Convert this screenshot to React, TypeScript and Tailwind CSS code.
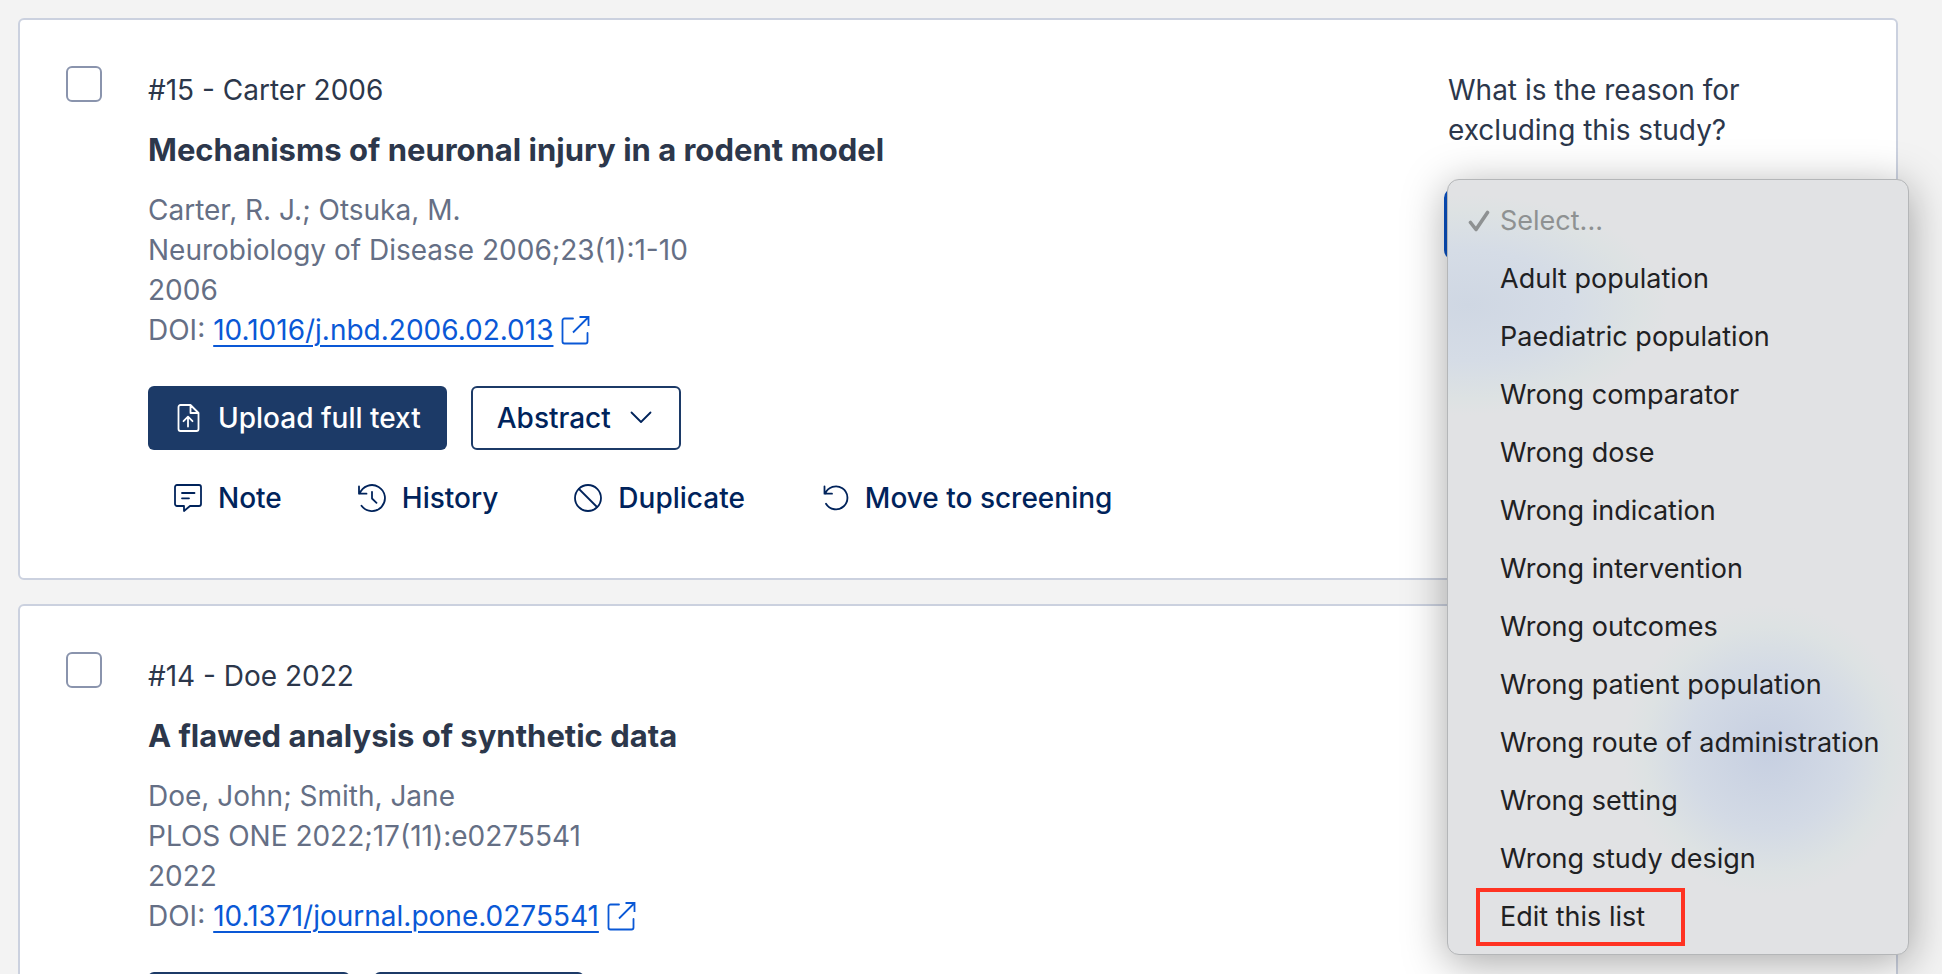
import { useState, type ReactNode } from 'react'

type Study = {
  ref: string
  title: string
  authors: string
  journal: string
  year: string
  doi: string
  hasFullText: boolean
}

const studies: Study[] = [
  {
    ref: '#15 - Carter 2006',
    title: 'Mechanisms of neuronal injury in a rodent model',
    authors: 'Carter, R. J.; Otsuka, M.',
    journal: 'Neurobiology of Disease 2006;23(1):1-10',
    year: '2006',
    doi: '10.1016/j.nbd.2006.02.013',
    hasFullText: false,
  },
  {
    ref: '#14 - Doe 2022',
    title: 'A flawed analysis of synthetic data',
    authors: 'Doe, John; Smith, Jane',
    journal: 'PLOS ONE 2022;17(11):e0275541',
    year: '2022',
    doi: '10.1371/journal.pone.0275541',
    hasFullText: true,
  },
]

const reasons = [
  'Adult population',
  'Paediatric population',
  'Wrong comparator',
  'Wrong dose',
  'Wrong indication',
  'Wrong intervention',
  'Wrong outcomes',
  'Wrong patient population',
  'Wrong route of administration',
  'Wrong setting',
  'Wrong study design',
]

function Icon({ children }: { children: ReactNode }) {
  return (
    <svg
      viewBox="0 0 28 28"
      className="size-7 shrink-0 overflow-visible"
      fill="none"
      stroke="currentColor"
      strokeWidth="1.8"
      strokeLinecap="round"
      strokeLinejoin="round"
      aria-hidden="true"
    >
      {children}
    </svg>
  )
}

const UploadIcon = () => (
  <Icon>
    <path d="M16.500 1H6.500a2 2 0 0 0-2 2v22a2 2 0 0 0 2 2h16a2 2 0 0 0 2-2V9L16.500 1v8h8M14 22.500v-9.500M9.500 17.200l4.500-4.500 4.500 4.500" />
  </Icon>
)

const NoteIcon = () => (
  <Icon>
    <path d="M3 1h22a2 2 0 0 1 2 2v17a2 2 0 0 1-2 2h-9l-6 5v-5H3a2 2 0 0 1-2-2V3a2 2 0 0 1 2-2ZM8 9h12.500M8 14.300h7" />
  </Icon>
)

const HistoryIcon = () => (
  <Icon>
    <path d="M1 2.500v7.200h7.500M1.700 9.700A13 13 0 1 1 3.500 21.800M14 7.800V14.500l4.500 4.300" />
  </Icon>
)

const BlockIcon = () => (
  <Icon>
    <circle cx="14" cy="14" r="13" />
    <path d="m5 5 18 18" />
  </Icon>
)

const UndoIcon = () => (
  <Icon>
    <path d="M3.500 2.500v7.200h7.500M4.200 9.700A11.500 11.500 0 1 1 5 19.700" />
  </Icon>
)

const ExternalIcon = () => (
  <Icon>
    <path d="M12 2.500H3.500a2 2 0 0 0-2 2v21a2 2 0 0 0 2 2h21a2 2 0 0 0 2-2V17" />
    <path d="M18.500 1H27.500v9M27.500 1 12 16.500" strokeLinecap="butt" strokeLinejoin="miter" />
  </Icon>
)

function ActionButton({ icon, label }: { icon: ReactNode; label: string }) {
  return (
    <button type="button" className="flex h-16 items-center gap-4 rounded-md px-[26px] font-medium text-[#00235b]">
      {icon}
      {label}
    </button>
  )
}

function ReasonMenu() {
  return (
    <ul
      role="listbox"
      aria-label="Exclusion reasons"
      className="absolute -top-[13px] -left-px z-10 w-[462px] rounded-xl border border-[#b4b6b8] bg-[#e1e2e4] bg-[radial-gradient(ellipse_200px_110px_at_20px_125px,#cfd7e3,#d5dce6_50%,#dde2e3_85%,transparent),radial-gradient(circle_145px_at_320px_570px,#c6cfe1,#d3dae5_55%,#dde2e3_85%,transparent)] pt-3 pb-2 text-[27px] text-[#1f2123] shadow-[0_8px_44px_rgba(0,0,0,0.35)]"
    >
      <li role="option" aria-selected="true" aria-disabled="true" className="flex h-[58px] items-center gap-[10px] pl-5 text-[#8e9192]">
        <svg viewBox="0 0 22 22" className="size-[22px]" fill="none" stroke="currentColor" strokeWidth="3.6" strokeLinecap="round" strokeLinejoin="round" aria-hidden="true">
          <path d="m2.500 12.500 5.500 7L19.500 2.500" />
        </svg>
        Select...
      </li>
      {reasons.map((reason) => (
        <li key={reason} role="option" aria-selected="false" className="flex h-[58px] items-center pl-13 whitespace-nowrap">
          {reason}
        </li>
      ))}
      <li role="option" aria-selected="false" className="flex h-[58px] items-center pl-7">
        <span className="flex h-[58px] w-[209px] items-center border-4 border-[#ff3322] pl-5">Edit this list</span>
      </li>
    </ul>
  )
}

function ExclusionReason({ id }: { id: string }) {
  return (
    <div className="w-[402px] shrink-0 pt-1">
      <label htmlFor={id} className="block pr-12">
        What is the reason for excluding this study?
      </label>
      <div className="relative mt-[42px]">
        <select id={id} className="block h-16 w-full rounded-md bg-white px-4 outline-4 outline-[#0a52c4]">
          <option>Select...</option>
          {reasons.map((reason) => (
            <option key={reason}>{reason}</option>
          ))}
        </select>
        <ReasonMenu />
      </div>
    </div>
  )
}

function StudyCard({ study, excluding }: { study: Study; excluding: boolean }) {
  const [checked, setChecked] = useState(false)

  return (
    <article className="flex rounded-md border-2 border-[#cbd1df] bg-white px-[46px] pt-[46px] pb-12">
      <input
        type="checkbox"
        aria-label={`Select ${study.ref}`}
        checked={checked}
        onChange={(e) => setChecked(e.target.checked)}
        className="size-9 shrink-0 appearance-none rounded-md border-2 border-[#8a94ad] bg-white checked:bg-[#1c3a67]"
      />
      <div className="ml-[46px] min-w-0 flex-1 pt-1">
        <p>{study.ref}</p>
        <h2 className="my-5 text-[31px] font-bold">{study.title}</h2>
        <div className="text-[#656f85]">
          <p>{study.authors}</p>
          <p>{study.journal}</p>
          <p>{study.year}</p>
          <p className="flex items-center gap-2">
            DOI:
            <a href={`https://doi.org/${study.doi}`} className="flex items-center gap-2 text-[#0a58d6]">
              <span className="underline decoration-2 underline-offset-[5px]">{study.doi}</span>
              <ExternalIcon />
            </a>
          </p>
        </div>
        <div className="mt-9 flex gap-6 font-medium">
          {study.hasFullText ? (
            <button type="button" className="flex h-16 w-[202px] items-center justify-center rounded-md border-2 border-[#1c3a67] text-[#00235b]">
              Full text
            </button>
          ) : (
            <button type="button" className="flex h-16 items-center gap-4 rounded-md bg-[#1c3a67] px-[26px] text-white">
              <UploadIcon />
              Upload full text
            </button>
          )}
          <button type="button" className="flex h-16 items-center gap-4 rounded-md border-2 border-[#1c3a67] px-6 text-[#00235b]">
            Abstract
            <Icon>
              <path d="m4.500 8.500 9.500 9.500 9.500-9.500" />
            </Icon>
          </button>
        </div>
        <div className="mt-4 flex gap-6">
          <ActionButton icon={<NoteIcon />} label="Note" />
          <ActionButton icon={<HistoryIcon />} label="History" />
          <ActionButton icon={<BlockIcon />} label="Duplicate" />
          <ActionButton icon={<UndoIcon />} label="Move to screening" />
        </div>
      </div>
      {excluding && <ExclusionReason id={`reason-${study.doi}`} />}
    </article>
  )
}

export default function App() {
  return (
    <main className="flex h-screen flex-col gap-6 overflow-hidden bg-[#f3f3f3] pt-[18px] pr-11 pl-[18px] font-['Inter',sans-serif] text-[28px] leading-10 text-[#2c374b]">
      {studies.map((study, i) => (
        <StudyCard key={study.doi} study={study} excluding={i === 0} />
      ))}
    </main>
  )
}
